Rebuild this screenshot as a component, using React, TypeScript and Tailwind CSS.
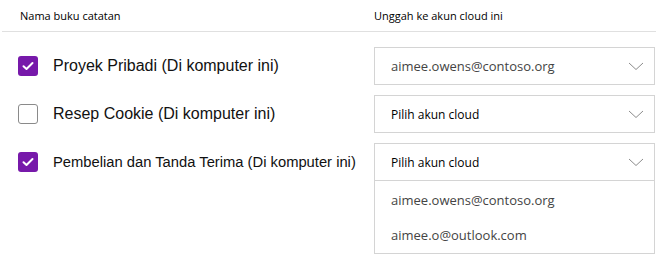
import { ReactNode } from "react";

const segoe = { fontFamily: '"Open Sans", "Noto Sans", sans-serif' };

function Check({ checked }: { checked: boolean }) {
  if (!checked) {
    return <div className="w-[20px] h-[20px] rounded-[3px] border border-[#8a8a8a] bg-white shrink-0" />;
  }
  return (
    <div className="w-[20px] h-[20px] rounded-[3px] bg-[#7719aa] flex items-center justify-center shrink-0">
      <svg width="12" height="10" viewBox="0 0 12 10" fill="none">
        <path d="M1.5 5.2 L4.5 8 L10.5 2" stroke="white" strokeWidth="2" strokeLinecap="round" strokeLinejoin="round" />
      </svg>
    </div>
  );
}

function Chevron() {
  return (
    <svg width="16" height="9" viewBox="0 0 16 9" fill="none" className="shrink-0">
      <path d="M1 1 L8 7.5 L15 1" stroke="#8c8c8c" strokeWidth="1" />
    </svg>
  );
}

function SelectHead({ children, muted }: { children: ReactNode; muted?: boolean }) {
  return (
    <div className="h-full flex items-center justify-between pl-[16px] pr-[10px]">
      <span className={muted ? "text-[13px] text-[#444] pt-[1px]" : "text-[12px] text-black pt-[2px]"} style={segoe}>
        {children}
      </span>
      <Chevron />
    </div>
  );
}

export default function App() {
  const rows = [
    { label: "Proyek Pribadi (Di komputer ini)", checked: true, size: "text-[16px]" },
    { label: "Resep Cookie (Di komputer ini)", checked: false, size: "text-[16px]" },
    { label: "Pembelian dan Tanda Terima (Di komputer ini)", checked: true, size: "text-[14.75px]" },
  ];

  return (
    <div className="w-[660px] h-[260px] bg-white overflow-hidden">
      {/* header */}
      <div className="ml-[2px] w-[654px] h-[32px] flex items-center border-b border-[#e0e0e0]">
        <div className="w-[372px] pl-[18px] pt-[2px] text-[11px] text-black" style={segoe}>Nama buku catatan</div>
        <div className="pt-[2px] text-[11px] text-black" style={segoe}>Unggah ke akun cloud ini</div>
      </div>

      <div className="mt-[15px] flex flex-col gap-[10px]">
        {rows.map((r, i) => (
          <div key={i} className="flex items-start">
            <div className="w-[374px] h-[38px] flex items-center pl-[18px] gap-[15px]">
              <Check checked={r.checked} />
              <span className={`${r.size} text-[#111]`} style={{ fontFamily: '"Liberation Sans", Arial, sans-serif' }}>
                {r.label}
              </span>
            </div>
            {i < 2 ? (
              <div className="w-[281px] h-[38px] border border-[#d4d4d4]">
                {i === 0 ? (
                  <SelectHead muted>aimee.owens@contoso.org</SelectHead>
                ) : (
                  <SelectHead>Pilih akun cloud</SelectHead>
                )}
              </div>
            ) : (
              <div className="w-[281px] border border-[#d4d4d4]">
                <div className="h-[37px] border-b border-[#d4d4d4]">
                  <SelectHead>Pilih akun cloud</SelectHead>
                </div>
                <div className="pt-[2px]">
                  <div className="h-[35px] flex items-center pl-[16px] text-[13px] text-[#444]" style={segoe}>
                    aimee.owens@contoso.org
                  </div>
                  <div className="h-[35px] flex items-center pl-[16px] text-[13px] text-[#444]" style={segoe}>
                    aimee.o@outlook.com
                  </div>
                </div>
              </div>
            )}
          </div>
        ))}
      </div>
    </div>
  );
}
